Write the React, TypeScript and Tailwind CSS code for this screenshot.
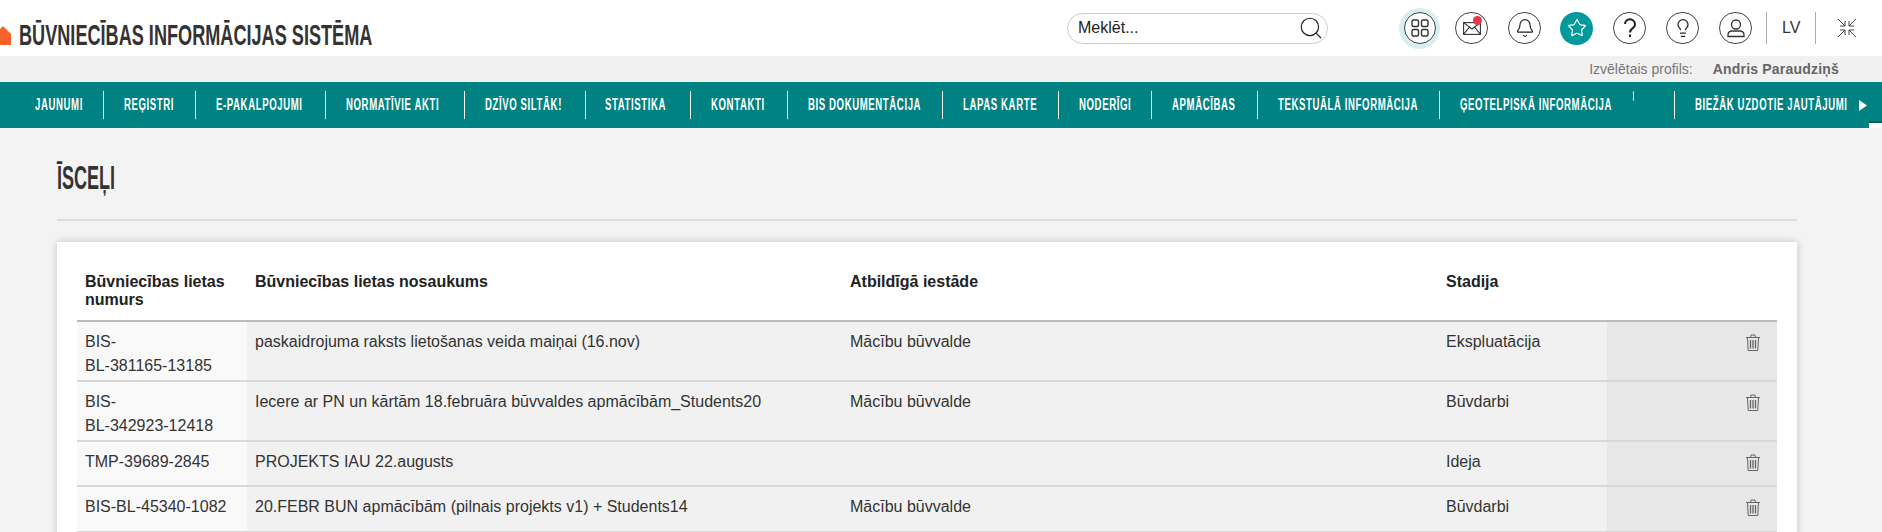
import React from "react";
import { Search, Bell, Star, Lightbulb } from "lucide-react";

const navItems = [
  { label: "JAUNUMI", width: "w-[104px] pl-[35px] border-r" },
  { label: "REĢISTRI", width: "w-[92px] pl-[20px] border-r" },
  { label: "E-PAKALPOJUMI", width: "w-[130px] pl-[20px] border-r" },
  { label: "NORMATĪVIE AKTI", width: "w-[139px] pl-[20px] border-r" },
  { label: "DZĪVO SILTĀK!", width: "w-[121px] pl-[20px] border-r" },
  { label: "STATISTIKA", width: "w-[105px] pl-[19px] border-r" },
  { label: "KONTAKTI", width: "w-[97px] pl-[20px] border-r" },
  { label: "BIS DOKUMENTĀCIJA", width: "w-[155px] pl-[20px] border-r" },
  { label: "LAPAS KARTE", width: "w-[116px] pl-[20px] border-r" },
  { label: "NODERĪGI", width: "w-[93px] pl-[20px] border-r" },
  { label: "APMĀCĪBAS", width: "w-[106px] pl-[20px] border-r" },
  { label: "TEKSTUĀLĀ INFORMĀCIJA", width: "w-[182px] pl-[20px] border-r" },
  { label: "ĢEOTELPISKĀ INFORMĀCIJA", width: "w-[193px] pl-[20px]" },
];

const rows = [
  { num: ["BIS-", "BL-381165-13185"], name: "paskaidrojuma raksts lietošanas veida maiņai (16.nov)", org: "Mācību būvvalde", stage: "Ekspluatācija", h: "h-[60px]" },
  { num: ["BIS-", "BL-342923-12418"], name: "Iecere ar PN un kārtām 18.februāra būvvaldes apmācībām_Students20", org: "Mācību būvvalde", stage: "Būvdarbi", h: "h-[60px]" },
  { num: ["TMP-39689-2845"], name: "PROJEKTS IAU 22.augusts", org: "", stage: "Ideja", h: "h-[45px]" },
  { num: ["BIS-BL-45340-1082"], name: "20.FEBR BUN apmācībām (pilnais projekts v1) + Students14", org: "Mācību būvvalde", stage: "Būvdarbi", h: "h-[46px]" },
];

const TrashIcon = () => (
  <svg width="16" height="17" viewBox="0 0 16 17" fill="none" stroke="#666" strokeWidth="1">
    <path d="M1 3.500h14M5.500 3.500l.5-2.500h4l.5 2.500" />
    <path d="M2.500 3.500l.7 13h9.600l.7-13" />
    <path d="M5.500 6v8.500M8 6v8.500M10.500 6v8.500" strokeWidth="1.300" />
  </svg>
);

const CircleIcon = ({ children, className }: { children: React.ReactNode; className?: string }) => (
  <div className={`relative flex h-[32px] w-[33px] shrink-0 items-center justify-center rounded-full border border-[#444] ${className ?? ""}`}>
    {children}
  </div>
);

const NavLabel = ({ children }: { children: React.ReactNode }) => (
  <span className="inline-block origin-left scale-x-[0.6] text-[16px] font-bold tracking-[1px] whitespace-nowrap text-white">
    {children}
  </span>
);

export default function App() {
  return (
    <div className="relative h-[532px] overflow-hidden bg-[#f3f3f3] font-['Liberation_Sans',Arial,sans-serif]">
      {/* Header */}
      <div className="flex h-[56px] items-center bg-white">
        <div className="flex w-[1067px] shrink-0 items-center">
          <svg width="11" height="19" viewBox="0 0 11 19" className="mt-[14px] shrink-0">
            <path d="M0 3L3 0L11 8V19H0Z" fill="#f9622c" />
          </svg>
          <h1 className="ml-[8px] mt-[14px] inline-block origin-left scale-x-[0.604] text-[30px] leading-none font-bold whitespace-nowrap text-[#333]">
            BŪVNIECĪBAS INFORMĀCIJAS SISTĒMA
          </h1>
        </div>
        <div className="flex h-[31px] w-[261px] shrink-0 items-center justify-between rounded-full border border-[#ccc] pr-[3px] pl-[10px]">
          <span className="text-[16px] text-[#222]">Meklēt...</span>
          <Search size={26} strokeWidth={1.100} className="text-[#222]" />
        </div>
        <div className="ml-[71px] flex h-[41px] w-[41px] shrink-0 items-center justify-center rounded-full bg-[#d9eeee]">
          <div className="flex h-[32px] w-[32px] items-center justify-center rounded-full border border-[#444] bg-white">
            <svg width="20" height="20" viewBox="0 0 20 20" fill="none" stroke="#333" strokeWidth="1.400">
              <rect x="2" y="2" width="6.500" height="6.500" rx="1.500" />
              <rect x="11.500" y="2" width="6.500" height="6.500" rx="1.500" />
              <rect x="2" y="11.500" width="6.500" height="6.500" rx="1.500" />
              <rect x="11.500" y="11.500" width="6.500" height="6.500" rx="1.500" />
            </svg>
          </div>
        </div>
        <CircleIcon className="ml-[15px]">
          <svg width="18" height="13" viewBox="0 0 18 13" fill="none" stroke="#333" strokeWidth="1.100">
            <rect x="0.600" y="0.600" width="16.800" height="11.800" />
            <path d="M0.600 0.600L9 7L17.400 0.600M0.600 12.400L6.500 5M17.400 12.400L11.500 5" />
          </svg>
          <span className="absolute top-[3px] right-[5px] h-[9px] w-[9px] rounded-full bg-[#e8344e]" />
        </CircleIcon>
        <CircleIcon className="ml-[20px]">
          <Bell size={20} strokeWidth={1.400} className="text-[#222]" />
        </CircleIcon>
        <div className="ml-[19px] flex h-[33px] w-[33px] shrink-0 items-center justify-center rounded-full bg-[#009a9a]">
          <Star size={20} strokeWidth={1.500} className="text-white" />
        </div>
        <CircleIcon className="ml-[20px]">
          <svg width="14" height="20" viewBox="0 0 14 20" fill="none" stroke="#222" strokeWidth="2">
            <path d="M2 6a5 4.800 0 1 1 8 3.900c-1.800 1.300-3 2.200-3 4.600" />
            <path d="M7 16.500v2.500" />
          </svg>
        </CircleIcon>
        <CircleIcon className="ml-[20px]">
          <Lightbulb size={20} strokeWidth={1.500} className="text-[#222]" />
        </CircleIcon>
        <CircleIcon className="ml-[20px]">
          <svg width="20" height="20" viewBox="0 0 20 20" fill="none" stroke="#333" strokeWidth="1.300">
            <circle cx="10" cy="6.500" r="4.500" />
            <path d="M2 18.500v-1.500c0-2.500 2-4 4.500-4h7c2.500 0 4.500 1.500 4.500 4v1.500z" />
          </svg>
        </CircleIcon>
        <div className="ml-[14px] h-[32px] w-px shrink-0 bg-[#aaa]" />
        <span className="ml-[15px] w-[19px] text-[16px] text-[#333]">LV</span>
        <div className="ml-[14px] h-[32px] w-px shrink-0 bg-[#aaa]" />
        <svg width="20" height="20" viewBox="0 0 20 20" fill="none" stroke="#444" strokeWidth="1" className="ml-[21px] shrink-0">
          <path d="M1 1L8 8M8 3V8H3M19 1L12 8M12 3V8H17M1 19L8 12M8 17V12H3M19 19L12 12M12 17V12H17" />
        </svg>
      </div>

      {/* Profile bar */}
      <div className="flex h-[26px] items-center justify-end bg-[#f1f1f1] pr-[43px] text-[14px]">
        <span className="text-[#777]">Izvēlētais profils:</span>
        <span className="ml-[20px] font-bold tracking-[0.2px] text-[#666]">Andris Paraudziņš</span>
      </div>

      {/* Nav */}
      <div className="relative flex h-[46px] items-center bg-[#008282]">
        {navItems.map((item) => (
          <div key={item.label} className={`flex h-[28px] shrink-0 items-center border-white ${item.width}`}>
            <NavLabel>{item.label}</NavLabel>
          </div>
        ))}
        <div className="h-[9px] w-px shrink-0 -translate-y-[9.500px] bg-white" />
        <div className="w-[40px] shrink-0" />
        <div className="h-[28px] w-px shrink-0 bg-white" />
        <div className="flex h-[28px] w-[173px] shrink-0 items-center pl-[20px]">
          <NavLabel>BIEŽĀK UZDOTIE JAUTĀJUMI</NavLabel>
        </div>
        <svg width="8" height="11" viewBox="0 0 8 11" className="ml-[11px] shrink-0">
          <path d="M0 0L8 5.500L0 11Z" fill="#fff" />
        </svg>
        <div className="absolute right-0 bottom-0 h-[7px] w-[13px] border-t-2 border-[#0a5a5a] bg-white" />
      </div>

      {/* Content */}
      <div className="px-[57px]">
        <h2 className="inline-block origin-left scale-x-[0.53] pt-[32px] text-[34px] leading-[34px] font-bold text-[#333]">
          ĪSCEĻI
        </h2>
        <div className="mt-[23px] h-[2px] w-[1740px] bg-[#dcdcdc]" />
        <div className="mt-[21px] w-[1740px] bg-white pt-[19px] pr-[20px] pb-[40px] pl-[20px] shadow-[0_0_8px_rgba(0,0,0,0.2)]">
          <table className="w-[1700px] table-fixed border-collapse text-[16px] leading-[24px] text-[#333]">
            <colgroup>
              <col className="w-[170px]" />
              <col className="w-[595px]" />
              <col className="w-[596px]" />
              <col className="w-[169px]" />
              <col className="w-[170px]" />
            </colgroup>
            <thead>
              <tr className="h-[60px] border-b-2 border-[#bbb] text-left leading-[18px] text-[#222]">
                <th className="px-[8px] pt-[12px] align-top">Būvniecības lietas numurs</th>
                <th className="px-[8px] pt-[12px] align-top">Būvniecības lietas nosaukums</th>
                <th className="px-[8px] pt-[12px] align-top">Atbildīgā iestāde</th>
                <th className="px-[8px] pt-[12px] align-top">Stadija</th>
                <th />
              </tr>
            </thead>
            <tbody>
              {rows.map((row) => (
                <tr key={row.name} className={`border-b-2 border-[#d8d8d8] ${row.h}`}>
                  <td className="bg-[#f9f9f9] px-[8px] pt-[8px] align-top">
                    {row.num.map((line) => (
                      <div key={line}>{line}</div>
                    ))}
                  </td>
                  <td className="bg-[#f1f1f1] px-[8px] pt-[8px] align-top">{row.name}</td>
                  <td className="bg-[#f1f1f1] px-[8px] pt-[8px] align-top">{row.org}</td>
                  <td className="bg-[#f1f1f1] px-[8px] pt-[8px] align-top">{row.stage}</td>
                  <td className="bg-[#e7e7e7] pt-[12px] pr-[16px] align-top">
                    <div className="flex justify-end">
                      <TrashIcon />
                    </div>
                  </td>
                </tr>
              ))}
            </tbody>
          </table>
        </div>
      </div>
    </div>
  );
}
